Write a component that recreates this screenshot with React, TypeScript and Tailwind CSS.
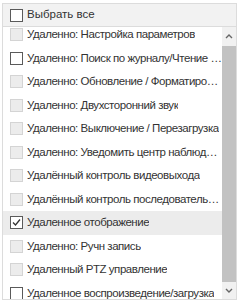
import React from "react";

type Item = { label: string; enabled?: boolean; checked?: boolean; active?: boolean };

const items: Item[] = [
  { label: "Удаленно: Настройка параметров" },
  { label: "Удаленно: Поиск по журналу/Чтение журнала", enabled: true },
  { label: "Удаленно: Обновление / Форматирование" },
  { label: "Удаленно: Двухсторонний звук" },
  { label: "Удаленно: Выключение / Перезагрузка" },
  { label: "Удаленно: Уведомить центр наблюдения" },
  { label: "Удалённый контроль видеовыхода" },
  { label: "Удалённый контроль последовательного порта" },
  { label: "Удаленное отображение", enabled: true, checked: true, active: true },
  { label: "Удаленно: Ручн запись" },
  { label: "Удаленный PTZ управление" },
  { label: "Удаленное воспроизведение/загрузка", enabled: true },
];

function Box({ enabled, checked }: { enabled?: boolean; checked?: boolean }) {
  if (!enabled) {
    return <span className="w-[13px] h-[13px] shrink-0 border border-[#d4d4d4] bg-[#ececec]" />;
  }
  return (
    <span className="w-[13px] h-[13px] shrink-0 border border-[#5a5a5a] bg-white flex items-center justify-center">
      {checked && (
        <svg width="9" height="9" viewBox="0 0 9 9" fill="none">
          <path d="M1 4.5 L3.5 7 L8 1.5" stroke="#333" strokeWidth="1.3" />
        </svg>
      )}
    </span>
  );
}

export default function App() {
  return (
    <div className="w-[241px] h-[300px] bg-white pt-[3px] pl-[2px] overflow-hidden" style={{ fontFamily: '"Liberation Sans", Arial, sans-serif' }}>
      <div className="w-[235px] h-[297px] border border-[#dcdcdc] flex flex-col text-[11.5px] text-[#333]">
        {/* header */}
        <div className="h-[23px] shrink-0 bg-[#f2f2f2] border-b border-[#dcdcdc] flex items-center gap-[4px] pl-[7px]">
          <Box enabled />
          <span>Выбрать все</span>
        </div>
        {/* list */}
        <div className="flex-1 flex min-h-0">
          <div className="flex-1 min-w-0 overflow-hidden">
            <div className="-mt-[4px]">
              {items.map((it) => (
                <div
                  key={it.label}
                  className={
                    "h-[23.5px] flex items-center gap-[4px] pl-[7px] tracking-[-0.45px] " +
                    (it.active ? "bg-[#ececec]" : "")
                  }
                >
                  <Box enabled={it.enabled} checked={it.checked} />
                  <span className="truncate">{it.label}</span>
                </div>
              ))}
            </div>
          </div>
          {/* scrollbar */}
          <div className="w-[14px] shrink-0 bg-[#f1f1f1] flex flex-col items-center">
            <div className="h-[19px] flex items-center justify-center">
              <svg width="8" height="5" viewBox="0 0 8 5" fill="none">
                <path d="M1 4 L4 1 L7 4" stroke="#666" strokeWidth="1.4" />
              </svg>
            </div>
            <div className="w-[14px] h-[236px] bg-[#c2c2c2]" />
            <div className="flex-1 flex items-center justify-center">
              <svg width="8" height="5" viewBox="0 0 8 5" fill="none">
                <path d="M1 1 L4 4 L7 1" stroke="#666" strokeWidth="1.4" />
              </svg>
            </div>
          </div>
        </div>
      </div>
    </div>
  );
}
